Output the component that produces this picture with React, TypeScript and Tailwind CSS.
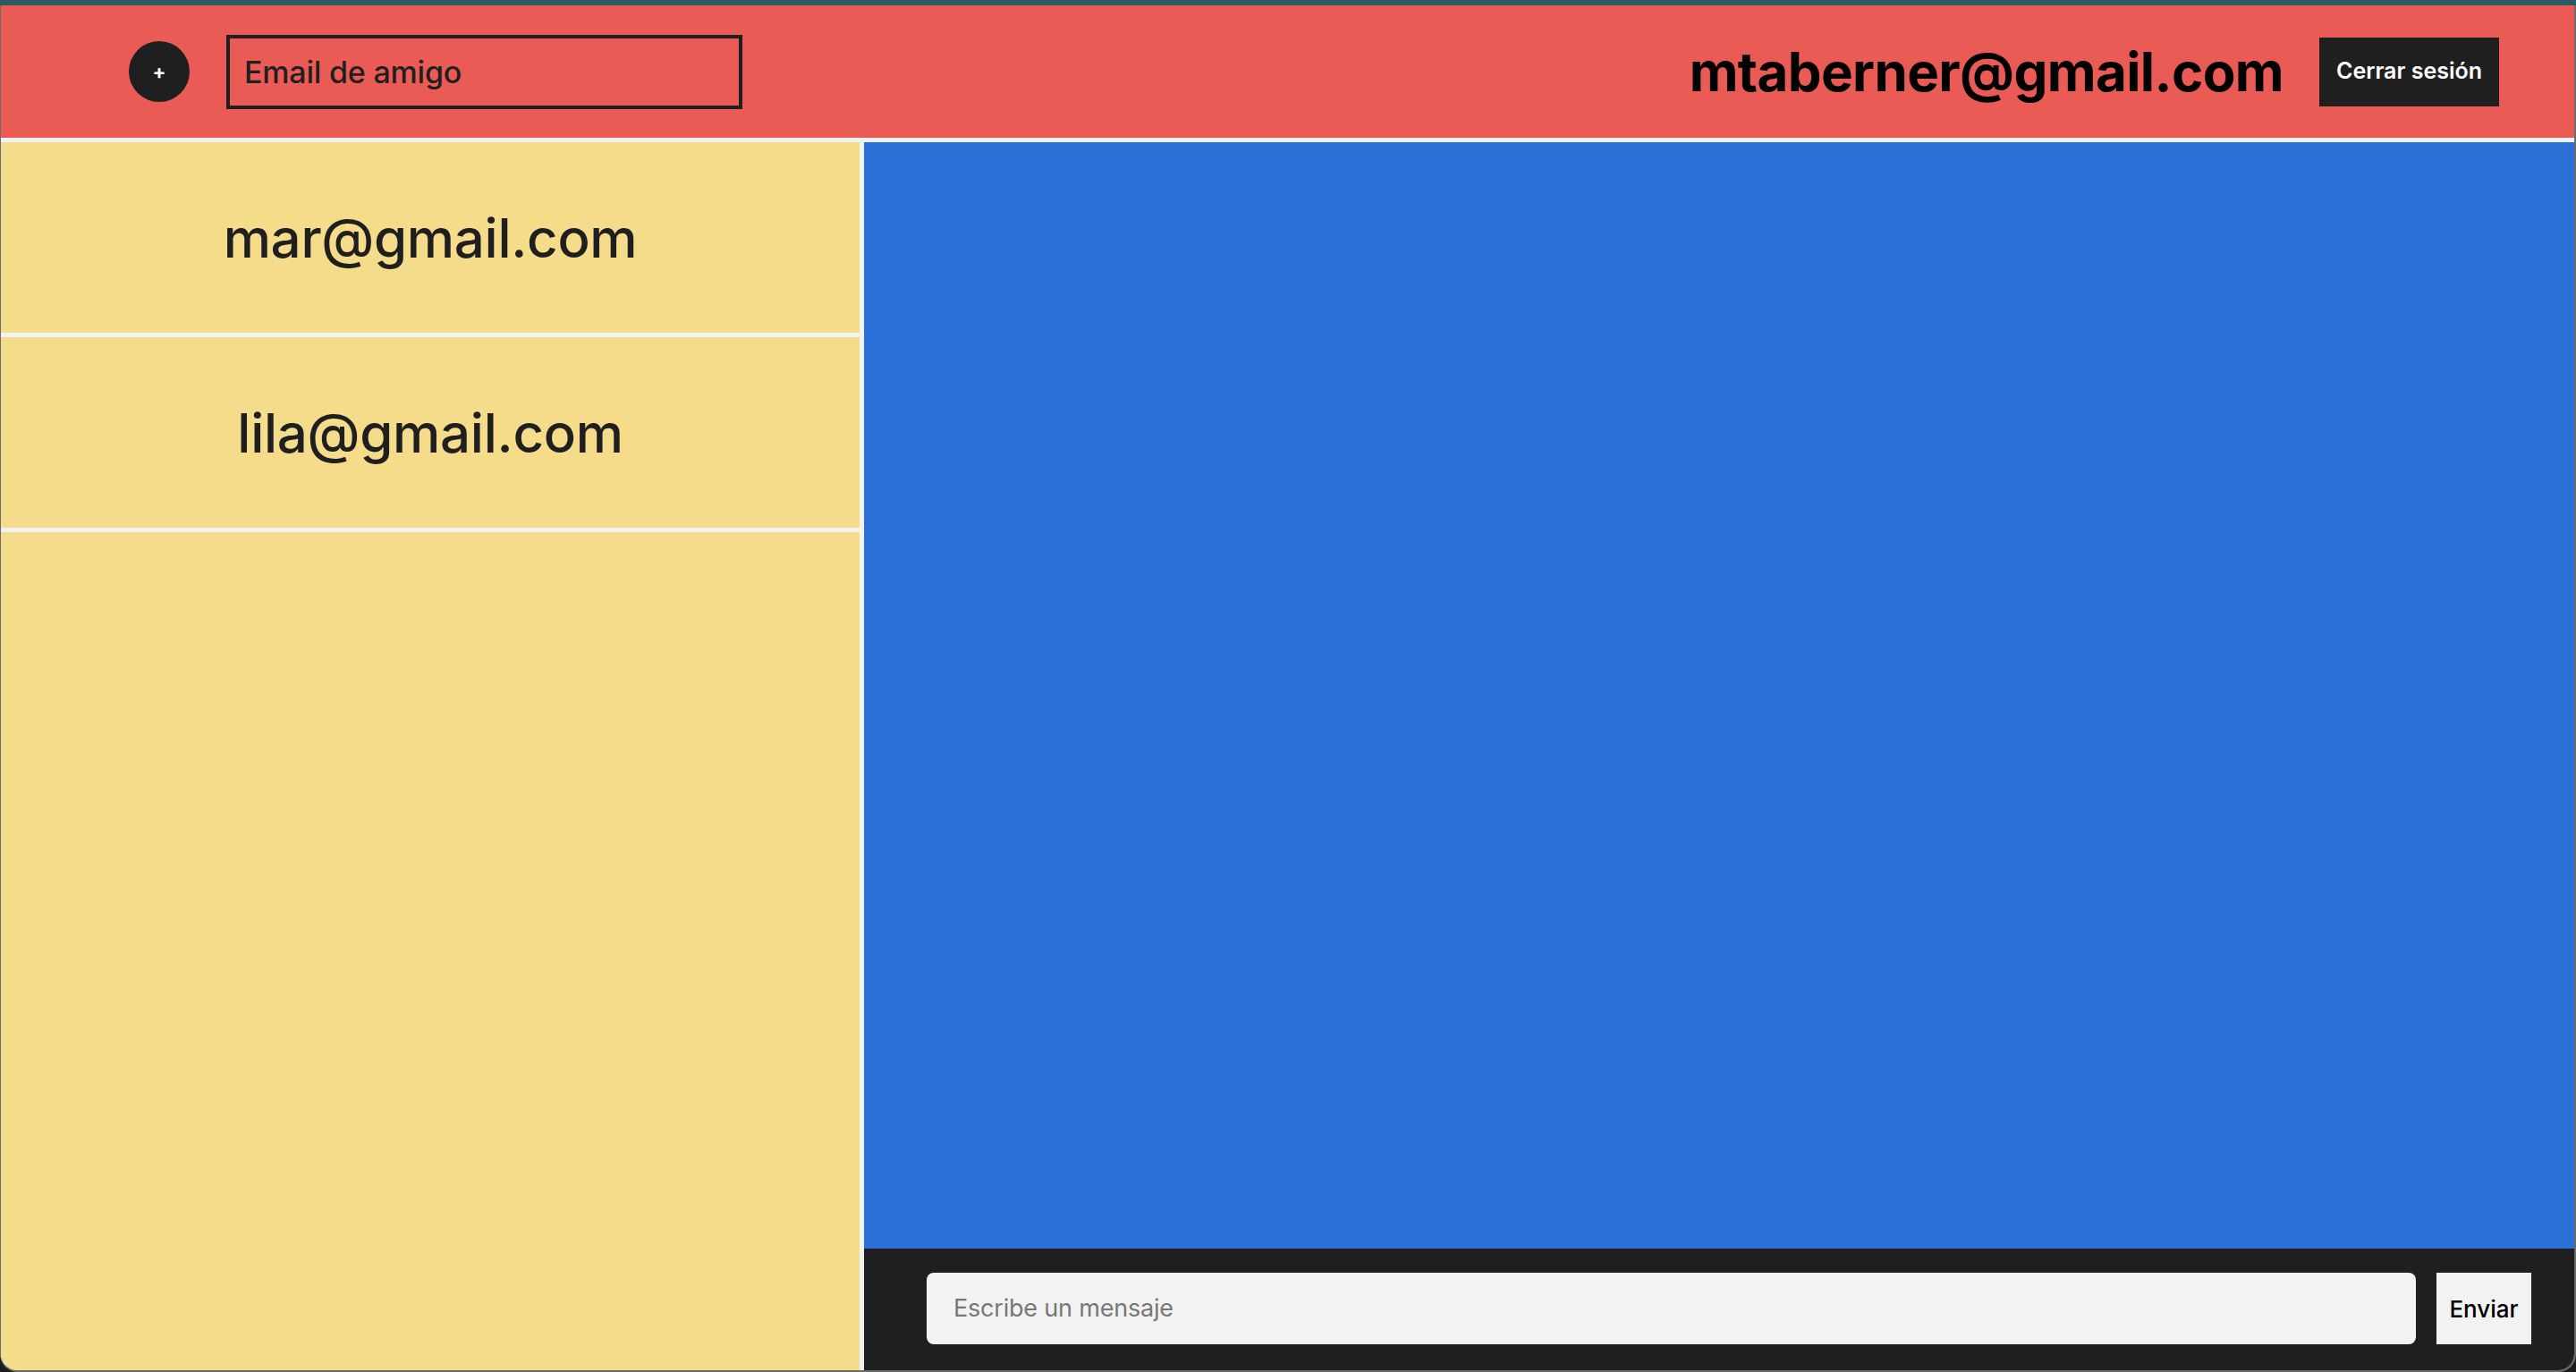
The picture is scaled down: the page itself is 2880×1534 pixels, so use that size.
import React from 'react';

const contacts = ['mar@gmail.com', 'lila@gmail.com'];

export default function App() {
  return (
    <div
      className="w-full h-[1534px] flex flex-col bg-[#1c1c1c]"
      style={{ fontFamily: 'Inter, "Noto Sans", sans-serif' }}
    >
      <div className="h-[6px] bg-[#295c61] shrink-0" />
      <div className="flex-1 flex flex-col bg-[#f2f2f2] rounded-b-[20px] overflow-hidden border-l border-r-2 border-b-2 border-[#6b6b6b] min-h-0">
        <header className="h-[148px] shrink-0 bg-[#ea5b55] flex items-center justify-between pl-[143px] pr-[84px]">
          <div className="flex items-center gap-[41px]">
            <button className="w-[68px] h-[68px] rounded-full bg-[#1f1f1f] text-white text-[22px] font-bold flex items-center justify-center leading-none">
              +
            </button>
            <div className="w-[577px] h-[83px] border-4 border-[#1f1f1f] flex items-center pl-[16px]">
              <span className="text-[34px] font-medium text-[#1f1f1f] tracking-[-0.2px]">Email de amigo</span>
            </div>
          </div>
          <div className="flex items-center gap-[40px]">
            <h1 className="text-[60px] font-bold text-black tracking-[-0.6px]">mtaberner@gmail.com</h1>
            <button className="w-[201px] h-[77px] bg-[#1f1f1f] text-white text-[25px] font-semibold">
              Cerrar sesión
            </button>
          </div>
        </header>

        <div className="flex-1 flex gap-[5px] mt-[5px] min-h-0">
          <aside className="w-[960px] shrink-0 flex flex-col gap-[5px]">
            {contacts.map((c) => (
              <div key={c} className="h-[213px] shrink-0 bg-[#f5dc8b] flex items-center justify-center">
                <span className="text-[60px] font-medium text-[#1f1f1f] tracking-[-0.3px]">{c}</span>
              </div>
            ))}
            <div className="flex-1 bg-[#f5dc8b]" />
          </aside>

          <main className="flex-1 flex flex-col min-w-0">
            <div className="flex-1 bg-[#2d70d8]" />
            <div className="h-[136px] shrink-0 bg-[#1f1f1f] flex items-center pl-[70px] pr-[48px] gap-[23px] pb-[2px]">
              <div className="flex-1 h-[80px] rounded-[8px] bg-[#f2f2f2] flex items-center pl-[30px]">
                <span className="text-[27px] text-[#777777] tracking-[-0.2px]">Escribe un mensaje</span>
              </div>
              <button className="w-[106px] h-[80px] bg-[#f2f2f2] text-[26px] font-medium text-black">
                Enviar
              </button>
            </div>
          </main>
        </div>
      </div>
    </div>
  );
}
